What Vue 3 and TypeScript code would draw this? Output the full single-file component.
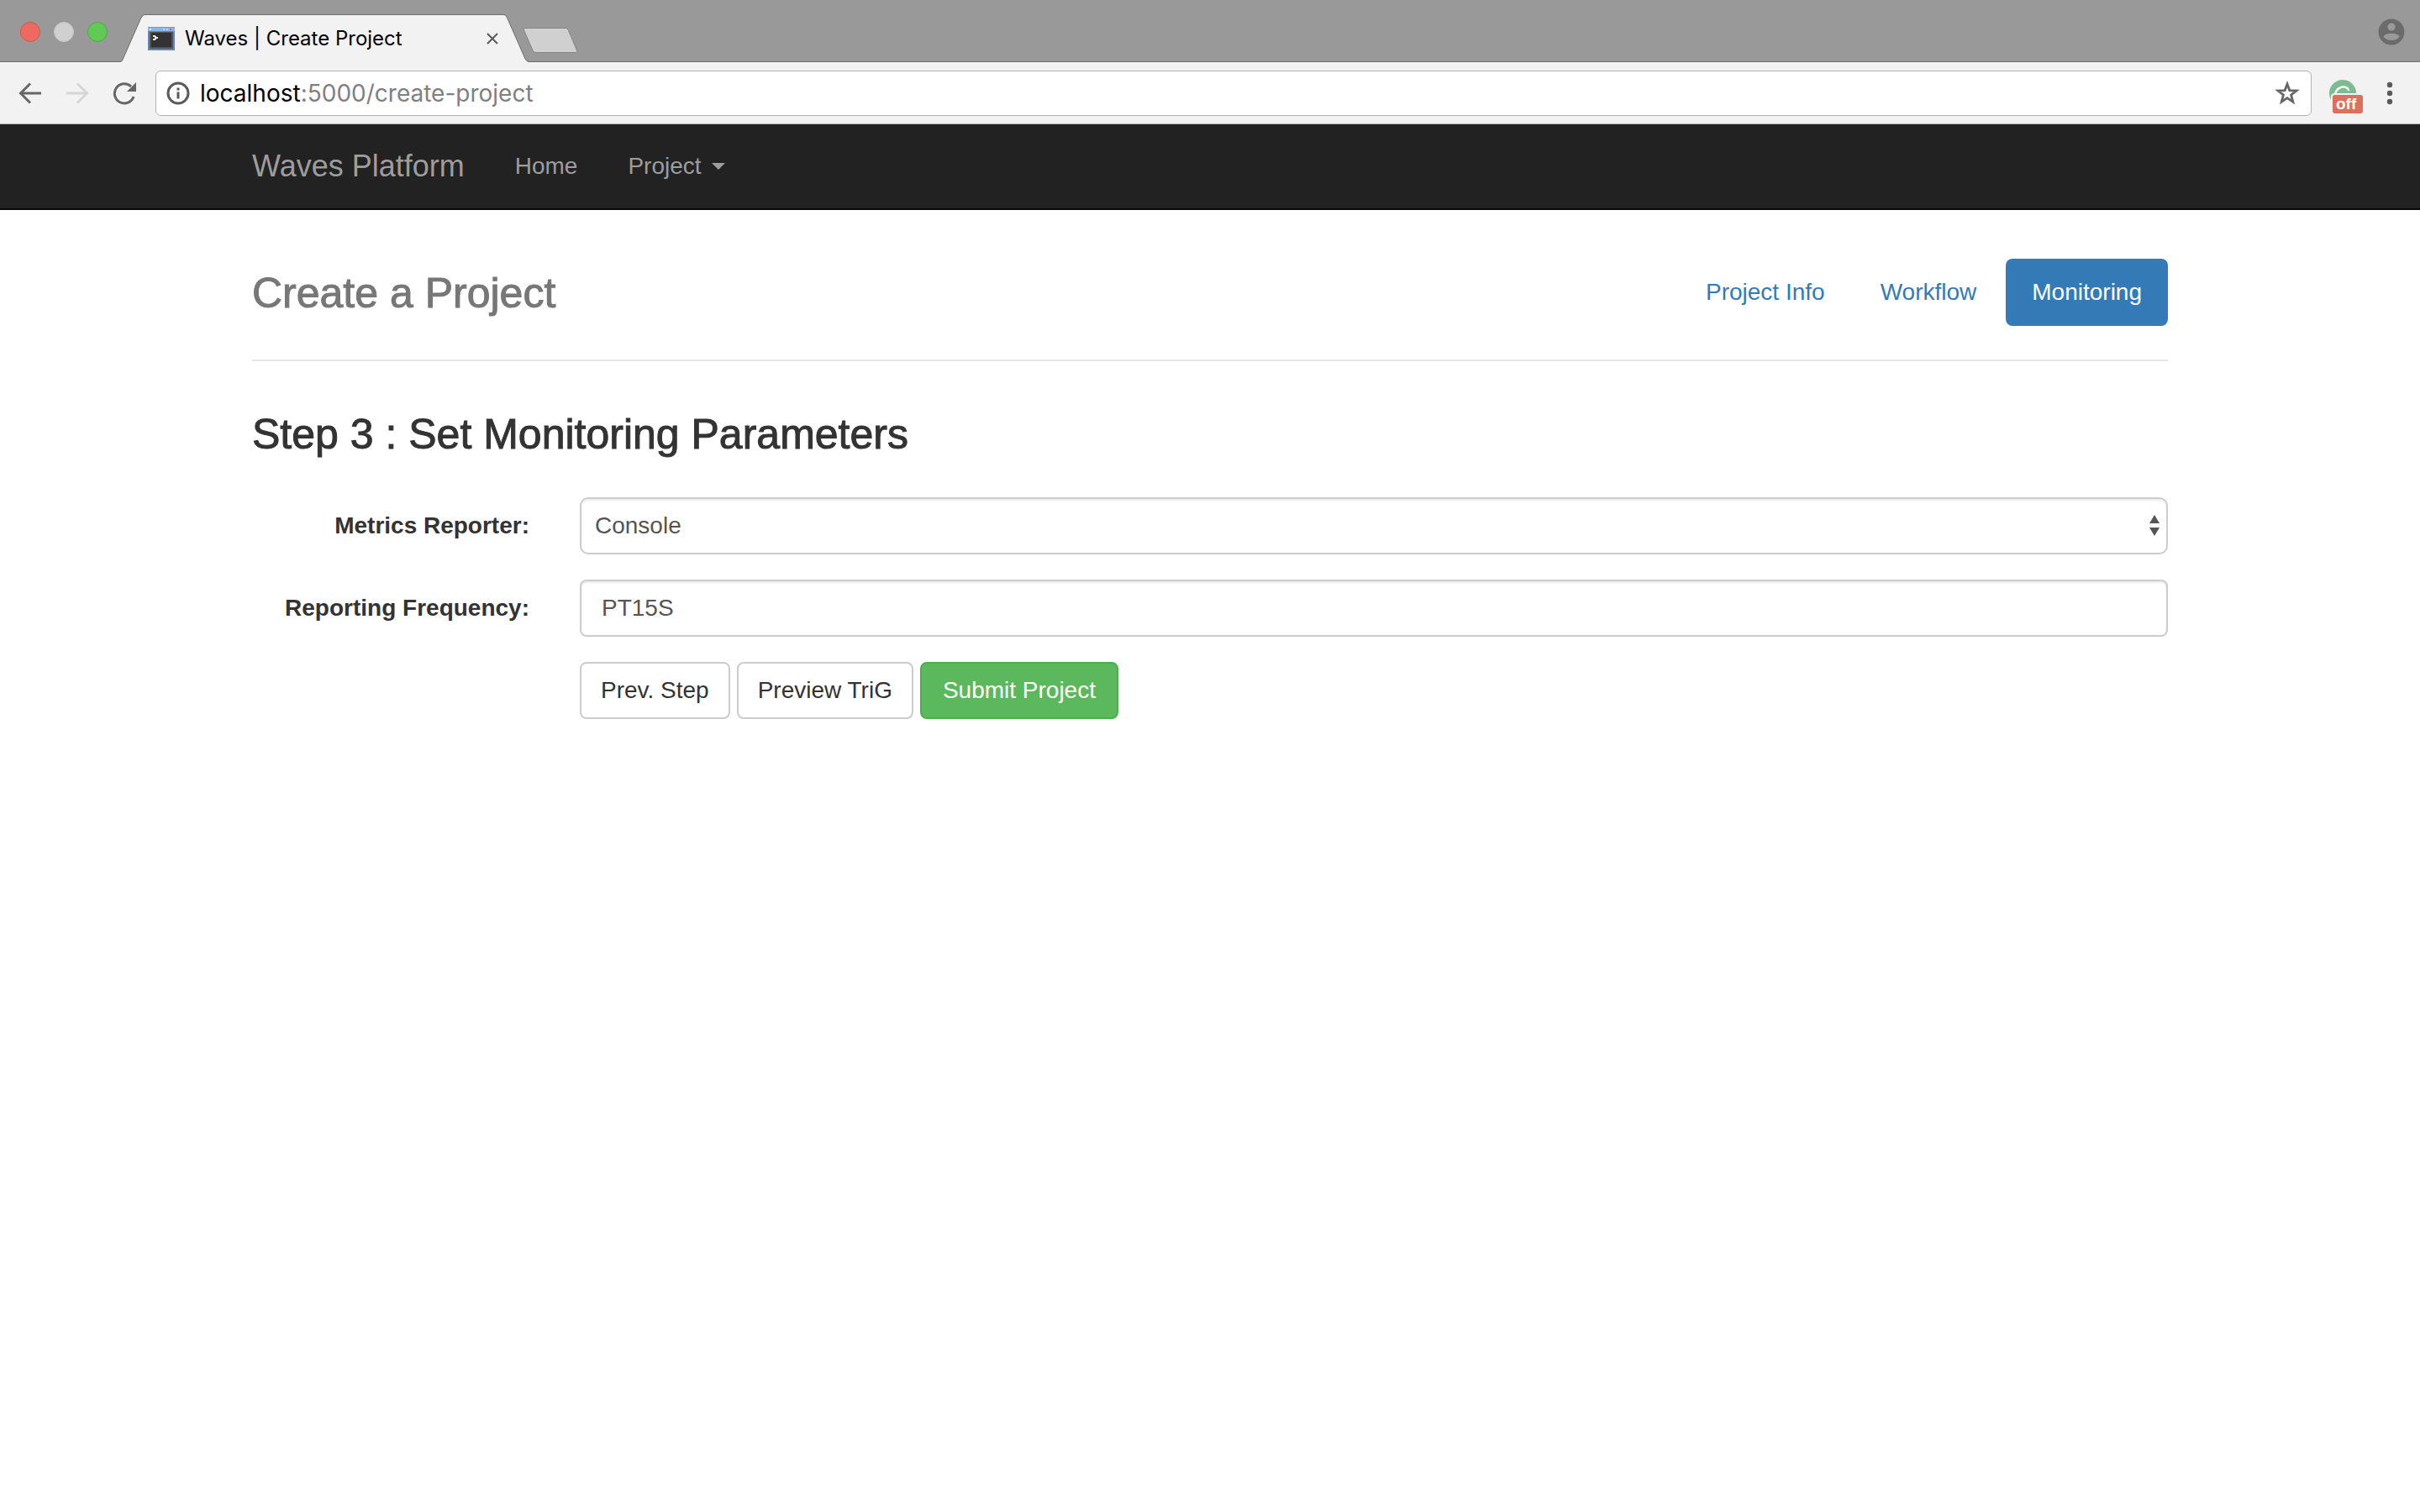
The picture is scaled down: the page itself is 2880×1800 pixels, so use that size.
<script setup lang="ts">
import { ref } from 'vue'

interface Step {
  label: string
  href: string
  active: boolean
}

const steps: Step[] = [
  { label: 'Project Info', href: '#info', active: false },
  { label: 'Workflow', href: '#workflow', active: false },
  { label: 'Monitoring', href: '#monitoring', active: true },
]

const reporters = ['Console']
const reporter = ref('Console')
const frequency = ref('PT15S')
const host = 'localhost'
const path = ':5000/create-project'
</script>

<template>
  <div class="window">
    <header class="tabstrip">
      <div class="lights">
        <span class="light red"></span>
        <span class="light grey"></span>
        <span class="light green"></span>
      </div>
      <div class="tab">
        <svg class="tab-shape" viewBox="0 0 486 58" preserveAspectRatio="none" aria-hidden="true">
          <path d="M0 58V56.500Q2 56.500 3 54L25 4Q27 .5 29 .5H456Q459 .5 460 3L482 53Q484 56.500 486 56.500V58Z" fill="#f2f2f2" />
          <path d="M0 56.500Q2 56.500 3 54L25 4Q27 .5 29 .5H456Q459 .5 460 3L482 53Q484 56.500 486 56.500" fill="none" stroke="#6e6e6e" />
        </svg>
        <svg class="favicon" viewBox="0 0 32 28" aria-hidden="true">
          <rect width="32" height="28" fill="#6286c2" />
          <rect width="32" height="5" fill="#8db4ea" />
          <rect width="32" height="1" fill="#7799cd" />
          <rect x="2" y="2" width="2" height="2" fill="#dfeafa" />
          <rect x="18" y="2" width="2" height="2" fill="#c3cddd" />
          <rect x="22" y="2" width="2" height="2" fill="#c3cddd" />
          <rect x="26" y="2" width="2" height="2" fill="#f2543d" />
          <rect x="2" y="6" width="28" height="20" fill="#555" />
          <rect x="4" y="7" width="24" height="17" fill="#333" />
          <path d="M6 10h3v1h1v1h2v2h-2v1H9v1H6v-2h2v-2H6z" fill="#e8e8e8" />
        </svg>
        <span class="tab-title">Waves | Create Project</span>
        <button class="bare" type="button" aria-label="Close tab">
          <svg width="14" height="14" viewBox="0 0 14 14"><path d="M1 1L13 13M13 1L1 13" stroke="#5a5a5a" stroke-width="2" /></svg>
        </button>
      </div>
      <button class="bare newtab" type="button" aria-label="New tab">
        <svg width="66" height="32" viewBox="0 0 66 32"><path d="M3 1.500H51Q53 1.500 54 3L64.500 28Q65 30.500 63 30.500H16Q13.500 30.500 12 28L1.500 4Q.8 1.500 3 1.500Z" fill="#d0d0d0" stroke="#848484" /></svg>
      </button>
      <button class="bare profile" type="button" aria-label="Profile">
        <svg width="32" height="32" viewBox="0 0 32 32"><circle cx="16" cy="16" r="15.400" fill="#6b6b6b" /><circle cx="16" cy="10" r="4.600" fill="#999" /><path d="M6.500 21.500C9 16.500 23 16.500 25.500 21.500C22 27.500 10 27.500 6.500 21.500Z" fill="#999" /></svg>
      </button>
    </header>

    <div class="toolbar">
      <div class="nav-buttons">
        <button class="bare" type="button" aria-label="Back">
          <svg width="28" height="28" viewBox="0 0 28 28"><path d="M27 14H3M14 2.500L2.500 14L14 25.500" fill="none" stroke="#666" stroke-width="3" /></svg>
        </button>
        <button class="bare" type="button" aria-label="Forward">
          <svg width="28" height="28" viewBox="0 0 28 28"><path d="M1 14H25M14 2.500L25.500 14L14 25.500" fill="none" stroke="#d6d6d6" stroke-width="3" /></svg>
        </button>
        <button class="bare" type="button" aria-label="Reload">
          <svg width="28" height="28" viewBox="0 0 28 28"><path d="M25 18A11.600 11.600 0 1 1 22 6" fill="none" stroke="#666" stroke-width="3" /><path d="M28 1V12H17Z" fill="#666" /></svg>
        </button>
      </div>
      <div class="urlbar">
        <svg width="28" height="28" viewBox="0 0 28 28" aria-hidden="true"><circle cx="14" cy="14" r="12" fill="none" stroke="#5a5a5a" stroke-width="3" /><path d="M12.500 7.500h3v3h-3zM12.500 12.500h3v8h-3z" fill="#5a5a5a" /></svg>
        <span class="url"><span class="host">{{ host }}</span>{{ path }}</span>
        <button class="bare" type="button" aria-label="Bookmark">
          <svg width="30" height="30" viewBox="0 0 30 30"><path d="M15 4L17.800 11.600L26 12L19.600 17L21.800 25.200L15 20.600L8.200 25.200L10.400 17L4 12L12.200 11.600Z" fill="none" stroke="#666" stroke-width="2.800" /></svg>
        </button>
      </div>
      <button class="bare extension" type="button" aria-label="Extension">
        <svg width="32" height="32" viewBox="0 0 32 32"><circle cx="16" cy="16" r="16" fill="#7dbc91" /><path d="M7 19C7 9 19 5 23 12" fill="none" stroke="#fff" stroke-width="2.500" stroke-linecap="round" /></svg>
        <span class="badge">off</span>
      </button>
      <button class="bare" type="button" aria-label="Menu">
        <svg width="8" height="28" viewBox="0 0 8 28"><circle cx="4" cy="4" r="3.200" fill="#5a5a5a" /><circle cx="4" cy="14" r="3.200" fill="#5a5a5a" /><circle cx="4" cy="24" r="3.200" fill="#5a5a5a" /></svg>
      </button>
    </div>

    <nav class="navbar">
      <div class="container navbar-inner">
        <a class="brand" href="#">Waves Platform</a>
        <a class="nav-link" href="#home">Home</a>
        <a class="nav-link" href="#project">Project<span class="caret"></span></a>
      </div>
    </nav>

    <main class="container">
      <div class="page-header">
        <h3 class="title muted">Create a Project</h3>
        <nav class="pills">
          <a v-for="step in steps" :key="step.label" :href="step.href" class="pill" :class="{ active: step.active }">{{ step.label }}</a>
        </nav>
      </div>

      <h3 class="title step-title">Step 3 : Set Monitoring Parameters</h3>
      <form class="form" @submit.prevent>
        <label for="reporter">Metrics Reporter:</label>
        <div class="select-wrap">
          <select id="reporter" v-model="reporter" class="control">
            <option v-for="name in reporters" :key="name">{{ name }}</option>
          </select>
          <svg class="arrows" width="12" height="26" viewBox="0 0 12 26" aria-hidden="true"><path d="M0 11L6 1L12 11ZM0 16H12L6 26Z" fill="#555" /></svg>
        </div>
        <label for="frequency">Reporting Frequency:</label>
        <input id="frequency" v-model="frequency" class="control" type="text" />
        <div class="actions">
          <button class="btn" type="button">Prev. Step</button>
          <button class="btn" type="button">Preview TriG</button>
          <button class="btn success" type="submit">Submit Project</button>
        </div>
      </form>
    </main>
  </div>
</template>

<style>
body {
  background: #fff;
}
</style>

<style scoped>
* {
  box-sizing: border-box;
}

.window {
  font: 28px/40px 'Liberation Sans', Arial, sans-serif;
  color: #333;
}

a {
  color: #337ab7;
  text-decoration: none;
}

svg {
  display: block;
  flex: none;
}

.bare {
  padding: 0;
  border: 0;
  background: none;
}

.tabstrip {
  display: flex;
  align-items: flex-end;
  height: 74px;
  padding-right: 18px;
  background: #999;
  border-bottom: 1px solid #6e6e6e;
}

.lights {
  display: flex;
  gap: 16px;
  align-self: flex-start;
  width: 143px;
  padding: 26px 0 0 24px;
}

.light {
  width: 24px;
  height: 24px;
  border: 1px solid;
  border-radius: 50%;
}

.red {
  background: #ee6a5e;
  border-color: #d6554a;
}

.grey {
  background: #d0d0d0;
  border-color: #c4c4c4;
}

.green {
  background: #62c956;
  border-color: #4ca940;
}

.tab {
  position: relative;
  display: flex;
  align-items: center;
  width: 486px;
  height: 56px;
  padding: 2px 36px 0 33px;
  font: 24px/32px Inter, sans-serif;
  color: #000;
}

.tab-shape {
  position: absolute;
  inset: 0;
  width: 100%;
  height: 58px;
}

.favicon {
  position: relative;
  width: 32px;
  height: 28px;
}

.tab-title {
  position: relative;
  flex: 1;
  padding-left: 12px;
}

.tab .bare {
  position: relative;
}

.newtab {
  margin: 0 auto 9px -7px;
}

.profile {
  align-self: center;
  padding-top: 2px;
}

.toolbar {
  display: flex;
  align-items: center;
  height: 74px;
  padding: 0 32px 0 22px;
  background: #f2f2f2;
  border-bottom: 1px solid #b3b3b3;
}

.nav-buttons {
  display: flex;
  gap: 28px;
  width: 163px;
}

.urlbar {
  display: flex;
  flex: 1;
  align-items: center;
  height: 54px;
  padding: 0 13px 0 12px;
  background: #fff;
  border: 1px solid #b3b3b3;
  border-radius: 6px;
}

.url {
  flex: 1;
  padding-left: 12px;
  font: 28px/40px Inter, sans-serif;
  color: #808080;
}

.host {
  color: #000;
}

.extension {
  position: relative;
  margin: 0 36px 0 21px;
}

.badge {
  position: absolute;
  top: 18px;
  left: 4px;
  width: 36px;
  height: 22px;
  padding-left: 4px;
  border-radius: 2px;
  outline: 2px solid #f2f2f2;
  background: #dd6f5d;
  color: #fff;
  font: bold 19px/22px 'Liberation Sans', sans-serif;
  text-align: left;
}

.navbar {
  background: #222;
  border-bottom: 2px solid #080808;
}

.container {
  max-width: 2340px;
  margin: 0 auto;
  padding: 0 30px;
}

.navbar-inner {
  display: flex;
  align-items: center;
  gap: 60px;
  height: 100px;
}

.navbar a {
  color: #9d9d9d;
}

.navbar .brand {
  font-size: 36px;
}

.nav-link {
  display: flex;
  align-items: center;
}

.caret {
  margin-left: 12px;
  border-top: 8px solid;
  border-right: 8px solid transparent;
  border-left: 8px solid transparent;
}

.page-header {
  display: flex;
  align-items: center;
  justify-content: space-between;
  margin-top: 58px;
  padding-bottom: 40px;
  border-bottom: 2px solid #e5e5e5;
}

.title {
  margin: 0;
  padding-top: 2px;
  font-size: 50px;
  font-weight: 400;
  line-height: 52px;
  -webkit-text-stroke: 1px;
}

.muted {
  color: #777;
}

.pills {
  display: flex;
  gap: 4px;
}

.pill {
  padding: 20px 31px;
  border-radius: 8px;
}

.pill.active {
  background: #337ab7;
  color: #fff;
}

.step-title {
  margin: 59px 0 49px;
}

.form {
  display: grid;
  grid-template-columns: 330px 1fr;
  gap: 30px 60px;
  align-items: center;
}

label {
  font-weight: 700;
  text-align: right;
}

.select-wrap {
  position: relative;
}

.control {
  appearance: none;
  width: 100%;
  height: 68px;
  padding: 0 24px;
  border: 2px solid #ccc;
  border-radius: 8px;
  background: #fff;
  box-shadow: inset 0 2px 2px rgba(0, 0, 0, 0.075);
  color: #555;
  font: inherit;
}

select.control {
  display: block;
  padding: 0 16px;
  border-radius: 10px;
}

.arrows {
  position: absolute;
  top: 20px;
  right: 10px;
}

.actions {
  display: flex;
  grid-column: 2;
  gap: 8px;
}

.btn {
  height: 68px;
  padding: 0 23px;
  border: 2px solid #ccc;
  border-radius: 8px;
  background: #fff;
  color: #333;
  font: inherit;
}

.success {
  padding: 0 25px;
  border-color: #4cae4c;
  background: #5cb85c;
  color: #fff;
}
</style>
